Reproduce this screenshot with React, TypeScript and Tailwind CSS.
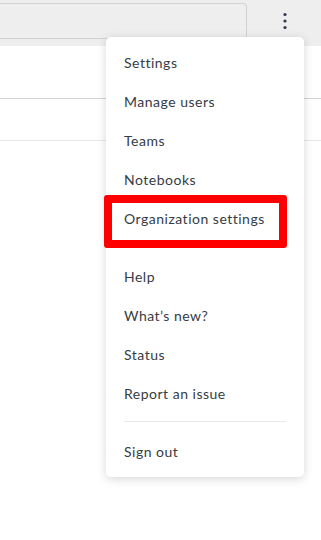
import { Fragment } from 'react';

const GROUPS: string[][] = [
  ['Settings', 'Manage users', 'Teams', 'Notebooks', 'Organization settings'],
  ['Help', "What\u2019s new?", 'Status', 'Report an issue'],
];

function Kebab() {
  return (
    <svg width="6" height="18" viewBox="0 0 6 18" className="text-[#2f3b47]">
      <circle cx="3" cy="2.5" r="1.6" fill="currentColor" />
      <circle cx="3" cy="9" r="1.6" fill="currentColor" />
      <circle cx="3" cy="15.5" r="1.6" fill="currentColor" />
    </svg>
  );
}

function MenuItem({ label }: { label: string }) {
  return (
    <div className="flex h-[39px] items-center pl-[18px] text-[14px] tracking-[0.5px] text-[#353c44]">{label}</div>
  );
}

export default function App() {
  return (
    <div
      className="relative h-[540px] w-[321px] overflow-hidden bg-white"
      style={{ fontFamily: 'Lato, "Open Sans", sans-serif' }}
    >
      {/* Top bar */}
      <div className="flex h-[46px] items-start bg-[#eeeeee]">
        <div className="mt-[3px] h-[36px] w-[247px] rounded-r-[4px] border border-l-0 border-[#d2d2d2]" />
        <div className="ml-auto mr-[33px] mt-[12px]">
          <Kebab />
        </div>
      </div>

      {/* Page rows */}
      <div className="h-[53px] border-b border-[#d4d4d4]" />
      <div className="h-[42px] border-b border-[#e6e6e6]" />

      {/* Dropdown */}
      <div className="absolute left-[106px] top-[37px] w-[198px] rounded-[5px] bg-white pt-[6px] pb-[6px] shadow-[0_2px_10px_rgba(0,0,0,0.16)]">
        {GROUPS.map((group, i) => (
          <Fragment key={i}>
            {i > 0 && <div className="h-[19px]" />}
            {group.map((label) => (
              <MenuItem key={label} label={label} />
            ))}
          </Fragment>
        ))}
        <div className="mx-[18px] mt-[8px] mb-[10px] h-px bg-[#e8e8e8]" />
        <MenuItem label="Sign out" />
      </div>

      {/* Highlight annotation */}
      <div className="absolute left-[104px] top-[195px] h-[53px] w-[183px] rounded-[3px] border-[8px] border-[#ff0000]" />
    </div>
  );
}
